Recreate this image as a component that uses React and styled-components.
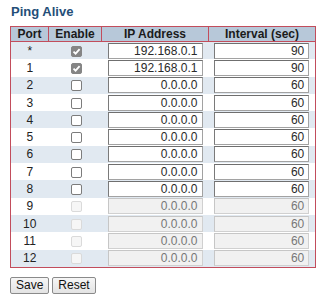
import React from "react";
import styled, { createGlobalStyle } from "styled-components";

const GlobalStyle = createGlobalStyle`
  body {
    margin: 0;
    background: #fff;
    font-family: "Liberation Sans", Arial, sans-serif;
  }
`;

const ROWS = [
  { port: "*", enabled: true, ip: "192.168.0.1", interval: 90 },
  { port: "1", enabled: true, ip: "192.168.0.1", interval: 90 },
  ...[2, 3, 4, 5, 6, 7, 8].map((n) => ({ port: String(n), enabled: false, ip: "0.0.0.0", interval: 60 })),
  ...[9, 10, 11, 12].map((n) => ({ port: String(n), enabled: false, ip: "0.0.0.0", interval: 60, disabled: true })),
];

const CheckBox = ({ checked, disabled }) => (
  <Box $checked={checked} $disabled={disabled}>
    {checked && (
      <svg width="9" height="9" viewBox="0 0 9 9">
        <path d="M1.5 4.6 L3.6 6.7 L7.6 2.2" fill="none" stroke="#fff" strokeWidth="1.8" />
      </svg>
    )}
  </Box>
);

const App = () => {
  return (
    <Page>
      <GlobalStyle />
      <Title>Ping Alive</Title>
      <Table>
        <colgroup>
          <col style={{ width: 38 }} />
          <col style={{ width: 53 }} />
          <col style={{ width: 107 }} />
          <col style={{ width: 107 }} />
        </colgroup>
        <thead>
          <tr>
            <Th>Port</Th>
            <Th>Enable</Th>
            <Th>IP Address</Th>
            <Th>Interval (sec)</Th>
          </tr>
        </thead>
        <tbody>
          {ROWS.map((r, i) => (
            <Row key={r.port} $alt={i % 2 === 0}>
              <Td>{r.port}</Td>
              <Td>
                <CheckBox checked={r.enabled} disabled={r.disabled} />
              </Td>
              <Td>
                <Field $disabled={r.disabled}>{r.ip}</Field>
              </Td>
              <Td>
                <Field $disabled={r.disabled}>{r.interval}</Field>
              </Td>
            </Row>
          ))}
        </tbody>
      </Table>
      <Buttons>
        <Button>Save</Button>
        <Button>Reset</Button>
      </Buttons>
    </Page>
  );
};

const Page = styled.div`
  padding: 4px 10px 0 10px;
`;

const Title = styled.h1`
  margin: 0 0 7px 1px;
  font-size: 13px;
  line-height: 15px;
  font-weight: bold;
  color: #244e78;
`;

const Table = styled.table`
  border-collapse: collapse;
  table-layout: fixed;
  width: 306px;
  border: 1px solid #c24d5c;
  font-size: 12px;
  color: #222;
`;

const Th = styled.th`
  height: 14px;
  padding: 0;
  background: #b7c8d9;
  border: 1px solid #c24d5c;
  font-size: 12px;
  font-weight: bold;
  line-height: 14px;
  color: #1b1b1b;
`;

const Row = styled.tr`
  background: ${(p) => (p.$alt ? "#e1e9f1" : "#fff")};
`;

const Td = styled.td`
  height: 17.3px;
  padding: 0;
  text-align: center;
  vertical-align: middle;
  line-height: 14px;
`;

const Box = styled.span`
  display: inline-flex;
  align-items: center;
  justify-content: center;
  box-sizing: border-box;
  width: 11px;
  height: 11px;
  margin-top: 2px;
  margin-left: 2px;
  border-radius: 2px;
  vertical-align: top;
  border: 1px solid
    ${(p) => (p.$checked ? "#858585" : p.$disabled ? "#dadada" : "#7c7c7c")};
  background: ${(p) => (p.$checked ? "#858585" : p.$disabled ? "#f6f6f6" : "#fff")};
`;

const Field = styled.div`
  box-sizing: border-box;
  display: inline-block;
  width: 95px;
  height: 16px;
  padding: 0 4px 0 0;
  text-align: right;
  font-size: 12px;
  line-height: 14px;
  vertical-align: top;
  color: ${(p) => (p.$disabled ? "#777" : "#2a2a2a")};
  background: ${(p) => (p.$disabled ? "#f1f1f1" : "#fff")};
  border: 1px solid ${(p) => (p.$disabled ? "#d0d0d0" : "#a2a2a2")};
  border-top-color: ${(p) => (p.$disabled ? "#c6c6c6" : "#6f6f6f")};
  border-left-color: ${(p) => (p.$disabled ? "#c6c6c6" : "#7a7a7a")};
`;

const Buttons = styled.div`
  display: flex;
  gap: 3px;
  margin-top: 9px;
`;

const Button = styled.button`
  box-sizing: border-box;
  height: 17px;
  padding: 0 5px;
  font-family: "Liberation Sans", Arial, sans-serif;
  font-size: 12px;
  line-height: 14px;
  color: #111;
  background: linear-gradient(#f6f6f6, #e3e3e3);
  border: 1px solid #8a8a8a;
  border-radius: 2px;
`;

export default App;
